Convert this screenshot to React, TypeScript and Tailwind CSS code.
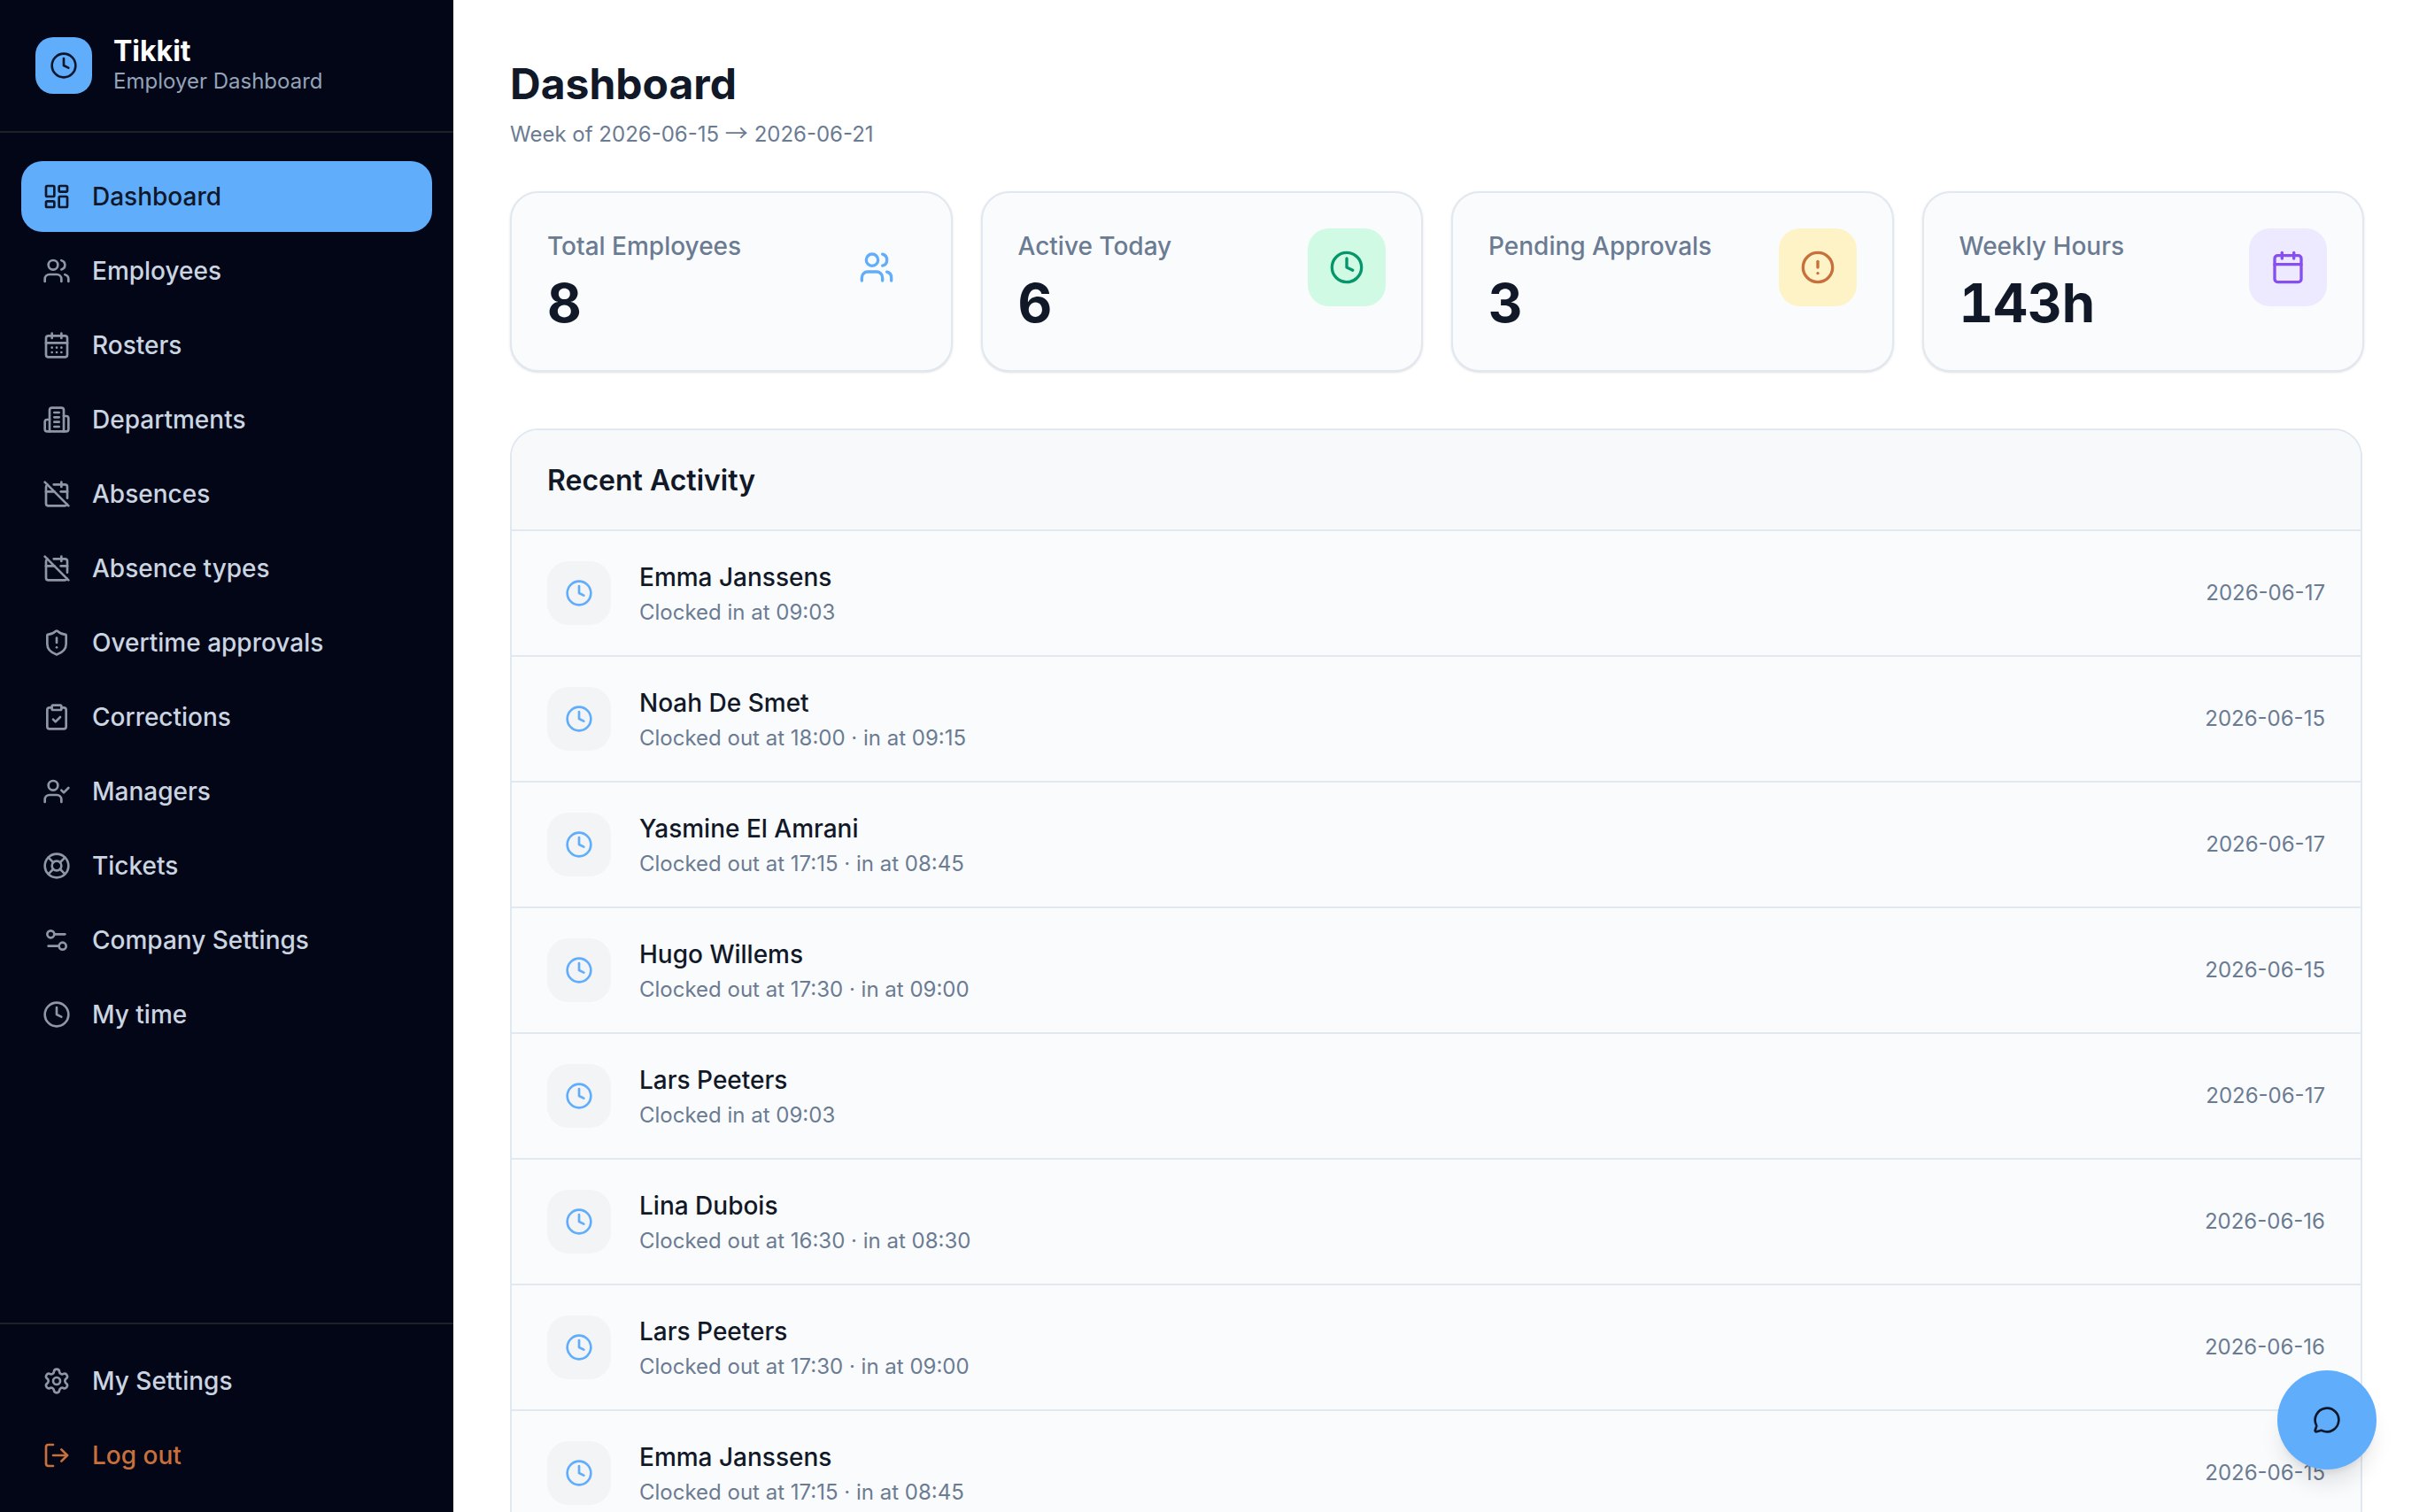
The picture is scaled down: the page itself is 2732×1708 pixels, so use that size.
import {
  Calendar,
  CalendarDays,
  CalendarOff,
  CircleAlert,
  ClipboardCheck,
  Clock,
  LayoutDashboard,
  LifeBuoy,
  LogOut,
  MessageCircle,
  Settings,
  Settings2,
  ShieldAlert,
  UserCheck,
  Users,
} from "lucide-react";

// the lucide build here has a different Building2, this one has the tall middle block
function Building({ size, className }: { size?: number; className?: string }) {
  return (
    <svg
      width={size}
      height={size}
      viewBox="0 0 24 24"
      fill="none"
      stroke="currentColor"
      strokeWidth="2"
      strokeLinecap="round"
      strokeLinejoin="round"
      className={className}
    >
      <path d="M6 22V4a2 2 0 0 1 2-2h8a2 2 0 0 1 2 2v18Z" />
      <path d="M6 12H4a2 2 0 0 0-2 2v6a2 2 0 0 0 2 2h2" />
      <path d="M18 9h2a2 2 0 0 1 2 2v9a2 2 0 0 1-2 2h-2" />
      <path d="M10 6h4" />
      <path d="M10 10h4" />
      <path d="M10 14h4" />
      <path d="M10 18h4" />
    </svg>
  );
}

const NAV = [
  { label: "Dashboard", icon: LayoutDashboard, active: true },
  { label: "Employees", icon: Users },
  { label: "Rosters", icon: CalendarDays },
  { label: "Departments", icon: Building },
  { label: "Absences", icon: CalendarOff },
  { label: "Absence types", icon: CalendarOff },
  { label: "Overtime approvals", icon: ShieldAlert },
  { label: "Corrections", icon: ClipboardCheck },
  { label: "Managers", icon: UserCheck },
  { label: "Tickets", icon: LifeBuoy },
  { label: "Company Settings", icon: Settings2 },
  { label: "My time", icon: Clock },
];

const STATS = [
  { label: "Total Employees", value: "8", icon: Users, box: "", color: "text-[#60adfb]" },
  { label: "Active Today", value: "6", icon: Clock, box: "bg-[#d1fae5]", color: "text-[#059669]" },
  { label: "Pending Approvals", value: "3", icon: CircleAlert, box: "bg-[#fef3c7]", color: "text-[#c8703c]" },
  { label: "Weekly Hours", value: "143h", icon: Calendar, box: "bg-[#ede9fe]", color: "text-[#874ff0]" },
];

const ACTIVITY = [
  { name: "Emma Janssens", detail: "Clocked in at 09:03", date: "2026-06-17" },
  { name: "Noah De Smet", detail: "Clocked out at 18:00 · in at 09:15", date: "2026-06-15" },
  { name: "Yasmine El Amrani", detail: "Clocked out at 17:15 · in at 08:45", date: "2026-06-17" },
  { name: "Hugo Willems", detail: "Clocked out at 17:30 · in at 09:00", date: "2026-06-15" },
  { name: "Lars Peeters", detail: "Clocked in at 09:03", date: "2026-06-17" },
  { name: "Lina Dubois", detail: "Clocked out at 16:30 · in at 08:30", date: "2026-06-16" },
  { name: "Lars Peeters", detail: "Clocked out at 17:30 · in at 09:00", date: "2026-06-16" },
  { name: "Emma Janssens", detail: "Clocked out at 17:15 · in at 08:45", date: "2026-06-15" },
];

function Sidebar() {
  return (
    <aside className="flex h-full w-[512px] shrink-0 flex-col bg-[#020617]">
      {/* Brand */}
      <div className="flex h-[150px] items-center gap-6 border-b-2 border-[#1e2128] px-10">
        <div className="flex h-16 w-16 items-center justify-center rounded-[20px] bg-[#60adfb] text-[#0f172a]">
          <Clock size={32} />
        </div>
        <div>
          <p className="text-[32px] leading-9 font-bold text-white">Tikkit</p>
          <p className="text-[24px] leading-8 text-[#94a3b8]">Employer Dashboard</p>
        </div>
      </div>

      {/* Links */}
      <nav className="flex flex-1 flex-col gap-1 px-6 pt-8">
        {NAV.map((item) => (
          <NavLink key={item.label} {...item} />
        ))}
      </nav>

      {/* Footer */}
      <div className="flex flex-col gap-1 border-t-2 border-[#1e2128] p-6">
        <NavLink label="My Settings" icon={Settings} />
        <div className="flex h-20 items-center gap-6 rounded-3xl px-6 text-[28px] font-medium text-[#c8703c]">
          <LogOut size={32} />
          <span>Log out</span>
        </div>
      </div>
    </aside>
  );
}

function NavLink({
  label,
  icon: Icon,
  active,
}: {
  label: string;
  icon: typeof Building;
  active?: boolean;
}) {
  return (
    <div
      className={
        active
          ? "flex h-20 items-center gap-6 rounded-3xl bg-[#60adfb] px-6 text-[28px] font-medium text-[#0f172a]"
          : "flex h-20 items-center gap-6 rounded-3xl px-6 text-[28px] font-medium text-[#cbd5e1]"
      }
    >
      <Icon size={32} className={active ? "" : "opacity-70"} />
      <span>{label}</span>
    </div>
  );
}

export default function App() {
  return (
    <div className="flex h-screen overflow-hidden bg-white font-['Inter',sans-serif]">
      <Sidebar />
      <main className="min-w-0 flex-1 overflow-hidden p-16">
        <h1 className="text-[48px] leading-[62px] font-bold text-[#111827]">Dashboard</h1>
        <p className="mt-2.5 h-8 text-[24px] leading-8 text-[#6b7b92]">
          Week of 2026-06-15{" "}
          <span className="font-['Noto_Sans_CJK_SC',sans-serif] text-[26px] leading-none">→</span> 2026-06-21
        </p>

        <div className="mt-12 mr-[-2px] grid grid-cols-4 gap-8">
          {STATS.map((stat) => (
            <div
              key={stat.label}
              className="flex items-start justify-between rounded-[32px] border-2 border-[#e2e8f0] bg-[#fafbfd] p-10 shadow-sm"
            >
              <div>
                <p className="text-[28px] leading-10 font-medium text-[#6b7b92]">{stat.label}</p>
                <p className="mt-2 text-[60px] leading-[72px] font-bold text-[#111827] tabular-nums">{stat.value}</p>
              </div>
              <div className={`flex h-22 w-22 items-center justify-center rounded-3xl ${stat.box} ${stat.color}`}>
                <stat.icon size={40} />
              </div>
            </div>
          ))}
        </div>

        <section className="mt-16 overflow-hidden rounded-[32px] border-2 border-[#e2e8f0] bg-[#fafbfd]">
          <h2 className="border-b-2 border-[#e2e8f0] bg-[#f8f9fb] px-10 pt-[33px] pb-[31px] text-[32px] leading-12 font-semibold text-[#111827]">
            Recent Activity
          </h2>
          {ACTIVITY.map((row, i) => (
            <div key={i} className="flex items-center justify-between border-b-2 border-[#e2e8f0] px-10 py-8">
              <div className="flex items-center gap-8">
                <div className="flex h-[72px] w-[72px] items-center justify-center rounded-3xl bg-[#f3f4f6] text-[#60adfb]">
                  <Clock size={32} />
                </div>
                <div>
                  <p className="text-[28px] leading-10 font-medium text-[#111827]">{row.name}</p>
                  <p className="mt-1 text-[24px] leading-8 text-[#6b7b92]">{row.detail}</p>
                </div>
              </div>
              <span className="text-[24px] leading-8 text-[#6b7b92]">{row.date}</span>
            </div>
          ))}
        </section>
      </main>

      <button className="fixed right-12 bottom-12 flex h-28 w-28 items-center justify-center rounded-full bg-[#60adfb] text-[#0f172a] shadow-xl">
        <MessageCircle size={32} />
      </button>
    </div>
  );
}
